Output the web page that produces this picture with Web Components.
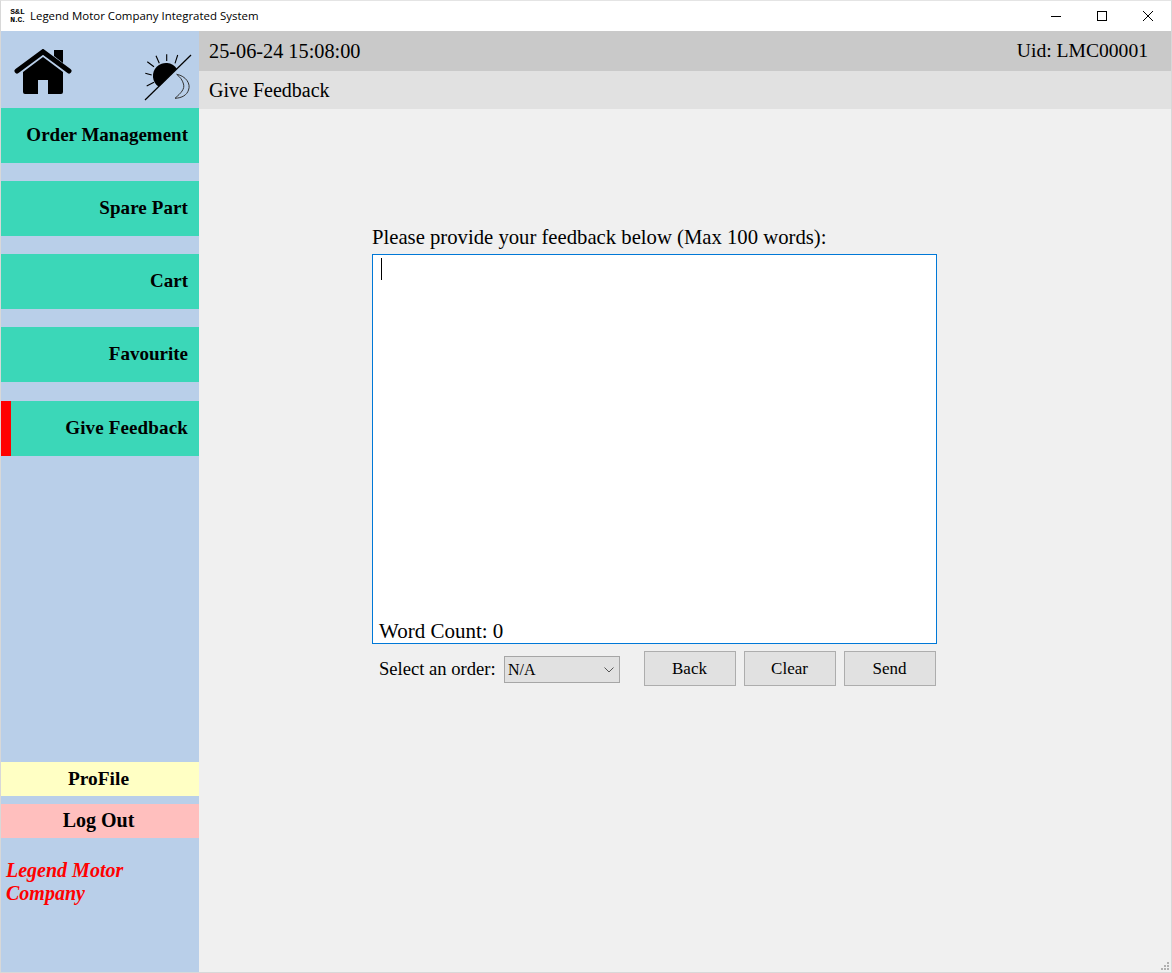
<!DOCTYPE html>
<html>
<head>
<meta charset="utf-8">
<title>Legend Motor Company Integrated System</title>
<style>
  html, body { margin: 0; padding: 0; height: 100%; background: #f0f0f0; overflow: hidden; }
  body { font-family: "Liberation Serif", "Times New Roman", serif; color: #000; }
</style>
</head>
<body>
<lmc-window>
  <lmc-sidebar slot="side">
    <lmc-nav-item>Order Management</lmc-nav-item>
    <lmc-nav-item style="letter-spacing:.1px">Spare Part</lmc-nav-item>
    <lmc-nav-item>Cart</lmc-nav-item>
    <lmc-nav-item>Favourite</lmc-nav-item>
    <lmc-nav-item active style="letter-spacing:.15px">Give Feedback</lmc-nav-item>
  </lmc-sidebar>
  <lmc-header slot="top" stamp="25-06-24 15:08:00" uid="Uid: LMC00001" page="Give Feedback"></lmc-header>
  <lmc-feedback></lmc-feedback>
</lmc-window>

<script>
class LmcWindow extends HTMLElement {
  constructor() {
    super()
    this.attachShadow({ mode: "open" })
    this.shadowRoot.innerHTML = `
      <style>
        :host { display: flex; flex-direction: column; width: 1172px; height: 973px; box-sizing: border-box; border: 1px solid #d8d8d8; border-top-color: #e4e4e4; background: #f0f0f0; position: relative; }
        .title { height: 30px; flex: none; background: #fff; display: flex; align-items: center; font: 11.45px "Open Sans", "Liberation Sans", sans-serif; color: #000; }
        .logo { width: 15px; margin-left: 9px; margin-right: 5px; font: bold 8px/8px "Liberation Mono", monospace; text-align: center; margin-top: -1px; white-space: nowrap; }
        .logo span { letter-spacing: -1.2px; }
        .name { flex: 1; margin-top: -1px; }
        .ctl { width: 46px; height: 30px; display: flex; align-items: center; justify-content: center; }
        .ctl svg { display: block; }
        .body { flex: 1; display: flex; min-height: 0; }
        .main { flex: 1; display: flex; flex-direction: column; min-width: 0; }
        .grip { position: absolute; right: 1px; bottom: 1px; }
      </style>
      <div class="title">
        <div class="logo">S&amp;L<br><span>N.C.</span></div>
        <div class="name">Legend Motor Company Integrated System</div>
        <div class="ctl"><svg width="10" height="10"><path d="M0 5.5H10" stroke="#000"/></svg></div>
        <div class="ctl"><svg width="10" height="10"><rect x=".5" y=".5" width="9" height="9" fill="none" stroke="#000"/></svg></div>
        <div class="ctl"><svg width="10" height="10"><path d="M0 0L10 10M10 0L0 10" stroke="#000"/></svg></div>
      </div>
      <div class="body">
        <slot name="side"></slot>
        <div class="main">
          <slot name="top"></slot>
          <slot></slot>
        </div>
      </div>
      <svg class="grip" width="10" height="10" fill="#b0b0b0">
        <rect x="7" y="1" width="2" height="2"/><rect x="4" y="4" width="2" height="2"/><rect x="7" y="4" width="2" height="2"/>
        <rect x="1" y="7" width="2" height="2"/><rect x="4" y="7" width="2" height="2"/><rect x="7" y="7" width="2" height="2"/>
      </svg>
    `
  }
}

class LmcSidebar extends HTMLElement {
  constructor() {
    super()
    this.attachShadow({ mode: "open" })
    this.shadowRoot.innerHTML = `
      <style>
        :host { display: flex; flex-direction: column; width: 198px; flex: none; background: #b9cfe9; }
        .icons { height: 77px; flex: none; display: flex; justify-content: space-between; align-items: flex-start; }
        .icons svg { display: block; }
        .home { margin: 18px 0 0 13px; }
        .mode { margin: 23px 6px 0 0; }
        nav { display: flex; flex-direction: column; gap: 18px; }
        .bottom { margin-top: auto; display: flex; flex-direction: column; gap: 8px; }
        .btn { height: 34px; display: flex; align-items: center; justify-content: center; padding-right: 3px; font: bold 20px "Liberation Serif", serif; }
        .profile { background: #ffffc4; font-size: 19.4px; }
        .logout { background: #ffbfbe; box-sizing: border-box; padding-bottom: 2px; }
        .brand { height: 134px; box-sizing: border-box; padding: 21px 0 0 5px; color: #f00; font: italic bold 20px/23px "Liberation Serif", serif; width: 150px; }
      </style>
      <div class="icons">
        <svg class="home" width="58" height="47" viewBox="0 0 58 47">
          <path d="M29 8L49 23V43a2 2 0 0 1-2 2H34V31H24V45H11a2 2 0 0 1-2-2V23Z" fill="#000"/>
          <path d="M3 22L29 2.800L55 22" fill="none" stroke="#000" stroke-width="5" stroke-linecap="round" stroke-linejoin="miter"/>
          <path d="M40 1H49V14L40 7Z" fill="#000"/>
        </svg>
        <svg class="mode" width="50" height="48" viewBox="143 54 50 48">
          <path d="M145 100L191 55" stroke="#000" stroke-width="1.200" fill="none"/>
          <path d="M176.800 68.800A13 13 0 1 0 158.800 86.800Z" fill="#000"/>
          <path d="M156 55.700L159.300 63.300M166.700 54.300V61M177.700 55L175 63.300M147.300 61.700L154 66.700M145.300 73.300L151.700 75M146.700 86L154 82.300" stroke="#000" stroke-width="1.100" fill="none"/>
          <path d="M176.700 74.300C186 76 191 84 188.500 90C187 95 182 98 175 98.300C181 93 185 89 183.500 84C182.500 80 180 77 176.700 74.300Z" fill="none" stroke="#333" stroke-width="1"/>
        </svg>
      </div>
      <nav><slot></slot></nav>
      <div class="bottom">
        <div class="btn profile">ProFile</div>
        <div class="btn logout">Log Out</div>
      </div>
      <div class="brand">Legend Motor Company</div>
    `
  }
}

class LmcNavItem extends HTMLElement {
  constructor() {
    super()
    this.attachShadow({ mode: "open" })
    this.shadowRoot.innerHTML = `
      <style>
        :host { display: flex; align-items: center; justify-content: flex-end; height: 55px; box-sizing: border-box; padding: 0 11px 2px 0; background: #3bd7b8; font: bold 19px "Liberation Serif", serif; }
        :host([active]) { border-left: 10px solid #f00; margin-top: 1px; }
      </style>
      <slot></slot>
    `
  }
}

class LmcHeader extends HTMLElement {
  constructor() {
    super()
    this.attachShadow({ mode: "open" })
    this.shadowRoot.innerHTML = `
      <style>
        :host { display: block; font: 20px "Liberation Serif", serif; }
        .info { height: 40px; background: #c9c9c9; display: flex; justify-content: space-between; align-items: center; padding: 0 23px 0 10px; }
        #stamp { font-size: 20.27px; }
        #uid { font-size: 19.6px; }
        .page { height: 38px; background: #e1e1e1; display: flex; align-items: center; padding-left: 10px; }
      </style>
      <div class="info"><span id="stamp"></span><span id="uid"></span></div>
      <div class="page" id="page"></div>
    `
  }

  connectedCallback() {
    this.shadowRoot.getElementById("stamp").textContent = this.getAttribute("stamp")
    this.shadowRoot.getElementById("uid").textContent = this.getAttribute("uid")
    this.shadowRoot.getElementById("page").textContent = this.getAttribute("page")
  }
}

class LmcFeedback extends HTMLElement {
  constructor() {
    super()
    this.attachShadow({ mode: "open" })
    this.shadowRoot.innerHTML = `
      <style>
        :host { display: block; padding: 117px 0 0 173px; font: 20px "Liberation Serif", serif; }
        .prompt { font-size: 20.7px; line-height: 23px; height: 28px; width: 565px; white-space: nowrap; }
        .box { width: 565px; height: 390px; box-sizing: border-box; border: 1px solid #0078d7; background: #fff; display: flex; flex-direction: column; justify-content: flex-end; position: relative; }
        .caret { position: absolute; left: 8px; top: 3px; width: 1px; height: 22px; background: #000; }
        .count { font-size: 21px; padding-left: 6px; line-height: 23px; }
        .row { display: flex; align-items: center; width: 564px; margin-top: 7px; height: 35px; font-size: 18.600px; }
        .label { margin-left: 7px; width: 125px; white-space: nowrap; }
        .select { width: 116px; height: 27px; margin-top: 2px; box-sizing: border-box; border: 1px solid #a6a6a6; background: #e1e1e1; display: flex; align-items: center; justify-content: space-between; padding: 1px 5px 0 3px; font-size: 16px; }
        .select svg { display: block; }
        button { font: 17px "Liberation Serif", serif; width: 92px; height: 35px; box-sizing: border-box; margin: 0; padding: 0 1px 0 0; border: 1px solid #adadad; background: #e1e1e1; color: #000; }
        .back { margin-left: 24px; }
        .clear, .send { margin-left: 8px; }
      </style>
      <div class="prompt">Please provide your feedback below (Max 100 words):</div>
      <div class="box">
        <div class="caret"></div>
        <div class="count">Word Count: 0</div>
      </div>
      <div class="row">
        <span class="label">Select an order:</span>
        <div class="select"><span>N/A</span><svg width="10" height="6"><path d="M.5 .5L5 5L9.500 .5" fill="none" stroke="#555"/></svg></div>
        <button class="back">Back</button>
        <button class="clear">Clear</button>
        <button class="send">Send</button>
      </div>
    `
  }
}

customElements.define("lmc-window", LmcWindow)
customElements.define("lmc-sidebar", LmcSidebar)
customElements.define("lmc-nav-item", LmcNavItem)
customElements.define("lmc-header", LmcHeader)
customElements.define("lmc-feedback", LmcFeedback)
</script>
</body>
</html>
